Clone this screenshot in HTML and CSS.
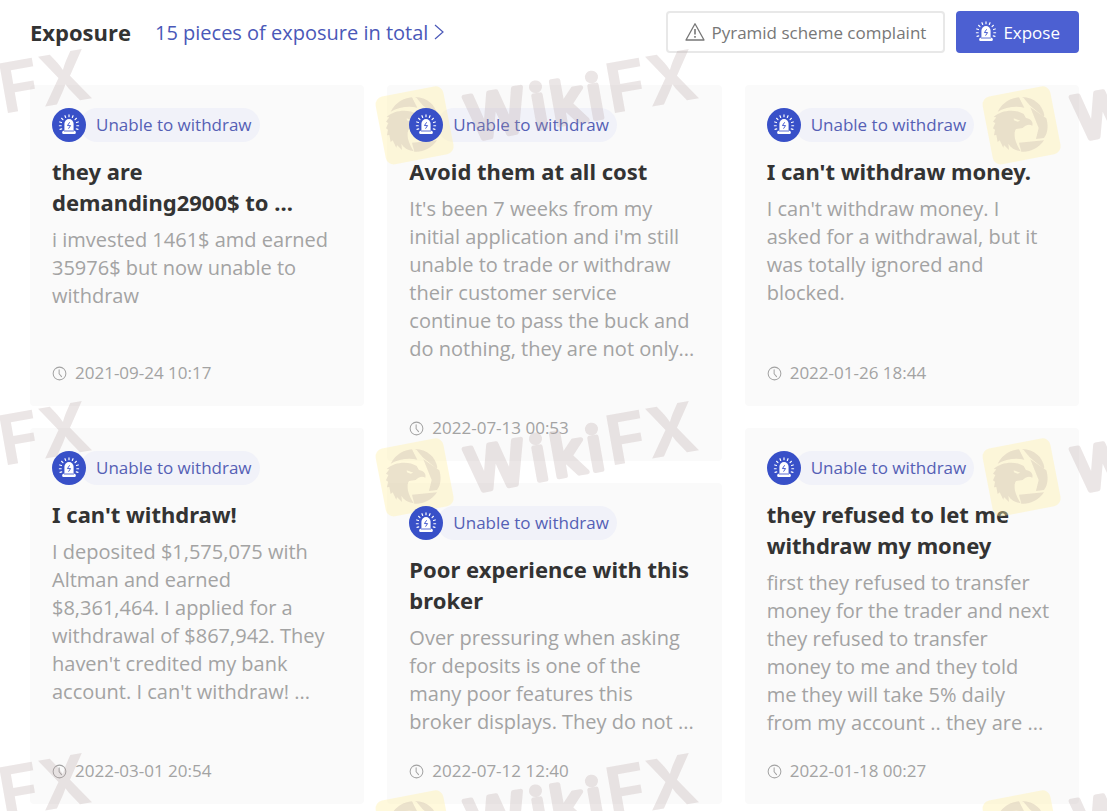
FILE: index.html
```html
<!DOCTYPE html>
<html lang="en">
<head>
<meta charset="utf-8">
<title>Exposure</title>
<link rel="stylesheet" href="styles.css">
</head>
<body>
<svg class="defs" aria-hidden="true">
  <symbol id="siren" viewBox="0 0 24 24">
    <path d="M7 18V10.500a5 5 0 0 1 10 0V18z" fill="currentColor"/>
    <path d="M4.500 20.500c0-1.800 1.200-2.500 2.500-2.500h10c1.300 0 2.500.7 2.500 2.500 0 .8-.5 1.200-1.200 1.200H5.700c-.7 0-1.200-.4-1.200-1.200z" fill="currentColor"/>
    <path d="M6.500 18.700h11" class="siren-cut" stroke-width=".7"/>
    <path d="M12.700 9l-2.400 3.600h3.400l-2.200 3.400" class="siren-cut" stroke-width="1"/>
    <path d="M12 1v2M7.600 1.900l.8 1.900M16.400 1.900l-.8 1.900M3.900 4.700l1.500 1.400M20.100 4.700l-1.500 1.400M1.900 8.700l1.900.6M22.100 8.700l-1.900.6M1.500 12.800h2M22.500 12.800h-2M2.200 16.800l1.900-.5M21.800 16.800l-1.900-.5" fill="none" stroke="currentColor" stroke-width="1.300" stroke-linecap="round"/>
  </symbol>
  <symbol id="clock" viewBox="0 0 16 16">
    <g fill="none" stroke="currentColor" stroke-width="1.100" stroke-linecap="round" stroke-linejoin="round">
      <circle cx="8" cy="8" r="6.800"/><path d="M7.600 4v4.300l2.600 3"/>
    </g>
  </symbol>
</svg>

<div class="page">
  <header class="bar">
    <h1 class="bar-title">Exposure</h1>
    <a class="bar-link" href="#">15 pieces of exposure in total
      <svg class="chevron" viewBox="0 0 10 16" aria-hidden="true"><path d="M1 1l8 7L1 15" fill="none" stroke="currentColor" stroke-width="1.200"/></svg>
    </a>
    <div class="bar-actions">
      <button class="btn" type="button">
        <svg class="btn-icon" viewBox="0 0 20 20" aria-hidden="true"><path d="M10 1.800L19 18H1z" fill="none" stroke="currentColor" stroke-width="1.300" stroke-linejoin="round"/><path d="M10 7v5.500M10 14v1.800" stroke="currentColor" stroke-width="1.600"/></svg>
        Pyramid scheme complaint
      </button>
      <button class="btn btn-primary" type="button">
        <svg class="btn-icon btn-siren" aria-hidden="true"><use href="#siren"/></svg>
        Expose
      </button>
    </div>
  </header>

  <main class="columns">
    <div class="column">
      <article class="card">
        <div class="tag"><span class="tag-icon"><svg aria-hidden="true"><use href="#siren"/></svg></span><span class="tag-text">Unable to withdraw</span></div>
        <h2 class="card-title">they are<br>demanding2900$ to ...</h2>
        <p class="card-text">i imvested 1461$ amd earned<br>35976$ but now unable to<br>withdraw</p>
        <time class="date"><svg aria-hidden="true"><use href="#clock"/></svg>2021-09-24 10:17</time>
      </article>
      <article class="card card-tall">
        <div class="tag"><span class="tag-icon"><svg aria-hidden="true"><use href="#siren"/></svg></span><span class="tag-text">Unable to withdraw</span></div>
        <h2 class="card-title">I can't withdraw!</h2>
        <p class="card-text">I deposited $1,575,075 with<br>Altman and earned<br>$8,361,464. I applied for a<br>withdrawal of $867,942. They<br>haven't credited my bank<br>account. I can't withdraw! ...</p>
        <time class="date"><svg aria-hidden="true"><use href="#clock"/></svg>2022-03-01 20:54</time>
      </article>
    </div>
    <div class="column">
      <article class="card card-tall">
        <div class="tag"><span class="tag-icon"><svg aria-hidden="true"><use href="#siren"/></svg></span><span class="tag-text">Unable to withdraw</span></div>
        <h2 class="card-title">Avoid them at all cost</h2>
        <p class="card-text">It's been 7 weeks from my<br>initial application and i'm still<br>unable to trade or withdraw<br>their customer service<br>continue to pass the buck and<br>do nothing, they are not only...</p>
        <time class="date"><svg aria-hidden="true"><use href="#clock"/></svg>2022-07-13 00:53</time>
      </article>
      <article class="card">
        <div class="tag"><span class="tag-icon"><svg aria-hidden="true"><use href="#siren"/></svg></span><span class="tag-text">Unable to withdraw</span></div>
        <h2 class="card-title">Poor experience with this<br>broker</h2>
        <p class="card-text">Over pressuring when asking<br>for deposits is one of the<br>many poor features this<br>broker displays. They do not ...</p>
        <time class="date"><svg aria-hidden="true"><use href="#clock"/></svg>2022-07-12 12:40</time>
      </article>
    </div>
    <div class="column">
      <article class="card">
        <div class="tag"><span class="tag-icon"><svg aria-hidden="true"><use href="#siren"/></svg></span><span class="tag-text">Unable to withdraw</span></div>
        <h2 class="card-title">I can't withdraw money.</h2>
        <p class="card-text">I can't withdraw money. I<br>asked for a withdrawal, but it<br>was totally ignored and<br>blocked.</p>
        <time class="date"><svg aria-hidden="true"><use href="#clock"/></svg>2022-01-26 18:44</time>
      </article>
      <article class="card card-tall">
        <div class="tag"><span class="tag-icon"><svg aria-hidden="true"><use href="#siren"/></svg></span><span class="tag-text">Unable to withdraw</span></div>
        <h2 class="card-title">they refused to let me<br>withdraw my money</h2>
        <p class="card-text">first they refused to transfer<br>money for the trader and next<br>they refused to transfer<br>money to me and they told<br>me they will take 5% daily<br>from my account .. they are ...</p>
        <time class="date"><svg aria-hidden="true"><use href="#clock"/></svg>2022-01-18 00:27</time>
      </article>
    </div>
  </main>
</div>

<svg class="watermark" aria-hidden="true">
  <defs>
    <pattern id="mark" x="370" y="40" width="607" height="352" patternUnits="userSpaceOnUse">
      <rect x="10" y="51" width="69" height="69" rx="8" transform="rotate(-11 44 85)" class="mark-tile"/>
      <g transform="translate(-2 38) scale(.3333)" class="mark-ink">
        <path d="M68 101C84 72 108 60 132 58L148 89C120 83 92 88 68 101z"/>
        <path d="M141 57C178 58 203 81 208 112L206 116L164 82L146 60z"/>
        <path d="M166 88L214 121C222 148 216 168 207 180L183 183L191 150z"/>
        <path d="M132 194L207 187C190 212 162 224 139 221z"/>
        <path fill-rule="evenodd" d="M56 117C80 94 124 93 146 108L153 120C168 123 175 131 172 143C163 138 154 140 143 150L123 153C114 165 119 192 137 220C119 217 107 209 100 197L102 216L87 201L85 209L74 187L68 192L64 171L57 172L60 155L54 151L61 135L54 131L64 118zM116 121L136 128L128 131L117 127z"/>
      </g>
      <g transform="rotate(-10 120 98)" class="mark-ink">
        <text x="100 166 186 223" y="97" class="mark-wiki">Wiki</text>
        <text x="243" y="95" class="mark-fx">FX</text>
      </g>
    </pattern>
  </defs>
  <rect width="100%" height="100%" fill="url(#mark)"/>
</svg>
</body>
</html>
```
FILE: styles.css
```css
* { box-sizing: border-box; }
body {
  margin: 0;
  background: #fff;
  color: #333;
  font-family: "Open Sans", "Noto Sans", sans-serif;
  position: relative;
  overflow-x: hidden;
}
h1, h2, p { margin: 0; }
.defs { position: absolute; width: 0; height: 0; }
.page { padding: 11px 28px 7px 30px; }

.bar { display: flex; align-items: center; height: 42px; margin-bottom: 32px; }
.bar-title { font-size: 22px; font-weight: 700; }
.bar-link {
  display: flex; align-items: center; gap: 6px;
  margin-left: 24px;
  color: #4a58b8; font-size: 20px; text-decoration: none;
}
.chevron { width: 10px; height: 16px; }
.bar-actions { display: flex; gap: 11px; margin-left: auto; }
.btn {
  display: flex; align-items: center; gap: 6px;
  height: 42px; padding: 0 17px;
  border: 2px solid #e8e8e8; border-radius: 4px;
  background: #fff; color: #777;
  font: 17px "Open Sans", "Noto Sans", sans-serif;
}
.btn-primary { border-color: #4c60d2; background: #4c60d2; color: #fff; }
.btn-icon { width: 20px; height: 20px; }
.btn-siren { width: 22px; height: 22px; color: #fff; }
.siren-cut { fill: none; stroke: #3a50cc; }

.columns { display: grid; grid-template-columns: repeat(3, 1fr); gap: 23px; align-items: start; }
.column { display: flex; flex-direction: column; gap: 22px; }
.card {
  display: flex; flex-direction: column; align-items: flex-start;
  min-height: 321px; padding: 23px 22px 22px;
  border-radius: 4px; background: #fafafa;
}
.card-tall { min-height: 376px; }
.tag { display: flex; align-items: center; }
.tag-icon {
  display: grid; place-items: center;
  width: 34px; height: 34px; border-radius: 50%;
  background: #3850c8; color: #fff;
  z-index: 1;
}
.tag-icon svg { width: 22px; height: 22px; }
.tag-text {
  height: 34px; margin-left: -6px; padding: 0 8px 0 16px;
  border-radius: 17px; background: #f1f2f9; color: #5560b5;
  font-size: 17px; line-height: 34px; white-space: nowrap;
}
.card-title { margin-top: 14px; font-family: "Noto Sans", "Open Sans", sans-serif; font-size: 22px; line-height: 31px; font-weight: 700; white-space: nowrap; }
.card-text { margin-top: 8px; color: #a3a3a3; font-size: 20px; line-height: 28px; white-space: nowrap; }
.date {
  display: flex; align-items: center; gap: 8px;
  margin-top: auto;
  color: #a3a3a3; font-size: 17px; line-height: 22px;
}
.date svg { width: 15px; height: 15px; }

.watermark {
  position: absolute; inset: 0;
  width: 100%; height: 100%;
  pointer-events: none;
}
.mark-tile { fill: #fff0a8; fill-opacity: .4; }
.mark-ink { fill: #b09a9a; stroke: #b09a9a; opacity: .25; stroke-width: 0; }
.mark-wiki { font: 500 60px Inter, sans-serif; stroke-width: 5px; stroke-linejoin: round; }
.mark-fx { font: 700 69px Inter, sans-serif; }
```
